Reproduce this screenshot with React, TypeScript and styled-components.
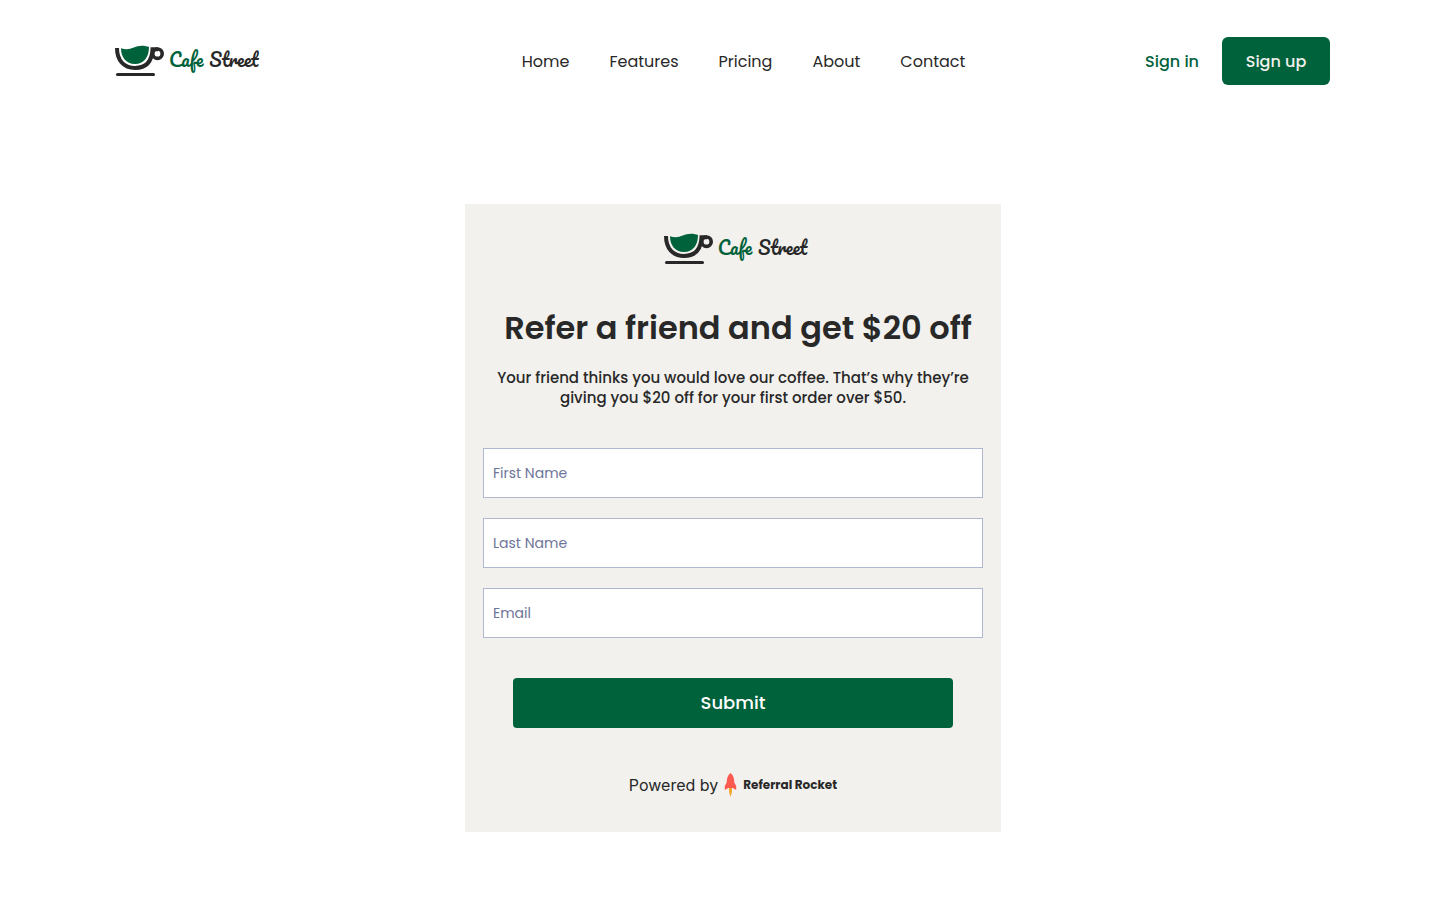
import React from "react";
import styled, { createGlobalStyle } from "styled-components";

const green = "#00623b";
const ink = "#282828";

const GlobalStyle = createGlobalStyle`
  *, *::before, *::after { box-sizing: border-box; }
  body {
    margin: 0;
    background: #fff;
    color: ${ink};
    font-family: Poppins, Inter, "Liberation Sans", sans-serif;
  }
`;

const Header = styled.header`
  display: grid;
  grid-template-columns: 1fr auto 1fr;
  align-items: center;
  padding: 37px 110px 0 114px;
`;

const LogoLink = styled.a`
  display: inline-flex;
  align-items: center;
  gap: 4px;
  justify-self: start;
  text-decoration: none;
`;

const LogoText = styled.span`
  display: flex;
  gap: 6px;
  padding-bottom: 2px;
  font: 400 18px/30px Pacifico, "Liberation Serif", cursive;
  color: ${ink};
`;

const LogoAccent = styled.span`
  color: ${green};
`;

const Nav = styled.nav`
  display: flex;
  gap: 40px;
  padding: 2px 0 0 43px;
`;

const NavLink = styled.a`
  font-size: 16px;
  line-height: 24px;
  color: ${ink};
  text-decoration: none;
`;

const Actions = styled.div`
  display: flex;
  align-items: center;
  justify-self: end;
  gap: 23px;
`;

const SignIn = styled.a`
  padding-top: 2px;
  font-size: 16px;
  font-weight: 500;
  line-height: 24px;
  color: ${green};
  text-decoration: none;
`;

const Button = styled.button<{ $wide?: boolean }>`
  width: ${(p) => (p.$wide ? "auto" : "108px")};
  height: ${(p) => (p.$wide ? 50 : 48)}px;
  margin: ${(p) => (p.$wide ? "20px 30px 0" : "0")};
  padding: ${(p) => (p.$wide ? "0 0 2px" : "0")};
  border: 0;
  border-radius: ${(p) => (p.$wide ? 4 : 6)}px;
  background: ${green};
  color: ${(p) => (p.$wide ? "#fff" : "#f2f1ed")};
  font-family: inherit;
  font-size: ${(p) => (p.$wide ? 18 : 16)}px;
  font-weight: 500;
  cursor: pointer;
`;

const Main = styled.main`
  display: flex;
  justify-content: center;
  padding: 119px 0 68px 26px;
`;

const Card = styled.section`
  display: flex;
  flex-direction: column;
  width: 100%;
  max-width: 536px;
  padding: 29px 18px 32px;
  background: #f2f1ed;
  text-align: center;
`;

const CardLogo = styled.div`
  display: flex;
  justify-content: center;
  padding-left: 4px;
`;

const Title = styled.h1`
  margin: 39px 0 0;
  padding-left: 10px;
  font-size: 32px;
  font-weight: 600;
  line-height: 48px;
  white-space: nowrap;
`;

const Lead = styled.p`
  margin: 16px 0 40px;
  font-size: 15px;
  font-weight: 500;
  line-height: 20px;
`;

const Form = styled.form`
  display: flex;
  flex-direction: column;
  gap: 20px;
`;

const Input = styled.input`
  width: 100%;
  height: 50px;
  padding: 0 9px;
  border: 1px solid #b0b7d0;
  border-radius: 0;
  background: #fff;
  color: ${ink};
  font-family: inherit;
  font-size: 14px;
  &::placeholder { color: #6e7599; opacity: 1; }
`;

const Powered = styled.footer`
  display: flex;
  align-items: center;
  justify-content: center;
  gap: 6px;
  margin-top: 42px;
  font-family: Inter, sans-serif;
  font-size: 16px;
  line-height: 30px;
`;

const Brand = styled.a`
  display: inline-flex;
  align-items: center;
  gap: 6px;
  color: ${ink};
  font-family: Poppins, Inter, sans-serif;
  font-size: 12px;
  font-weight: 700;
  text-decoration: none;
`;

const CupIcon = () => (
  <svg width="51" height="32" viewBox="0 0 51 32" fill="none" aria-hidden="true">
    <path d="M3 3C3 15 9.500 23 21 23S38 16 38.500 4.200H44" stroke={ink} strokeWidth="4" />
    <circle cx="43.500" cy="8.700" r="4.700" stroke={ink} strokeWidth="3.600" />
    <path d="M7 3.200C16 6.500 20 .8 28 .8C31 .8 33 1.400 35 2C35 12 30 19 21 19S7 12 7 3.200Z" fill={green} />
    <path d="M3.500 29.500H39.500" stroke={ink} strokeWidth="3" strokeLinecap="round" />
  </svg>
);

const RocketIcon = () => (
  <svg width="13" height="26" viewBox="0 0 13 26" aria-hidden="true">
    <path d="M5 15.500H8C8.300 19.500 7.500 22 6.500 25C5.500 22 4.700 19.500 5 15.500Z" fill="#f4a62a" />
    <path d="M6.500 1C9.200 3.200 10.300 6 10.300 10.500L12.200 14V18L8.800 16H4.200L.8 18V14L2.700 10.500C2.700 6 3.800 3.200 6.500 1Z" fill="#ff5a4f" />
  </svg>
);

const Logo = () => (
  <LogoLink href="#home" aria-label="Cafe Street">
    <CupIcon />
    <LogoText>
      <LogoAccent>Cafe</LogoAccent>
      <span>Street</span>
    </LogoText>
  </LogoLink>
);

const links = ["Home", "Features", "Pricing", "About", "Contact"];
const fields = [
  { label: "First Name", type: "text" },
  { label: "Last Name", type: "text" },
  { label: "Email", type: "email" },
];

export default function App() {
  return (
    <>
      <GlobalStyle />
      <Header>
        <Logo />
        <Nav>
          {links.map((name) => (
            <NavLink key={name} href={`#${name.toLowerCase()}`}>{name}</NavLink>
          ))}
        </Nav>
        <Actions>
          <SignIn href="#signin">Sign in</SignIn>
          <Button type="button">Sign up</Button>
        </Actions>
      </Header>
      <Main>
        <Card>
          <CardLogo><Logo /></CardLogo>
          <Title>Refer a friend and get $20 off</Title>
          <Lead>
            Your friend thinks you would love our coffee. That’s why they’re giving you $20 off for
            your first order over $50.
          </Lead>
          <Form>
            {fields.map(({ label, type }) => (
              <Input key={label} type={type} placeholder={label} aria-label={label} />
            ))}
            <Button $wide type="submit">Submit</Button>
          </Form>
          <Powered>
            <span>Powered by</span>
            <Brand href="#referral-rocket">
              <RocketIcon />
              Referral Rocket
            </Brand>
          </Powered>
        </Card>
      </Main>
    </>
  );
}
